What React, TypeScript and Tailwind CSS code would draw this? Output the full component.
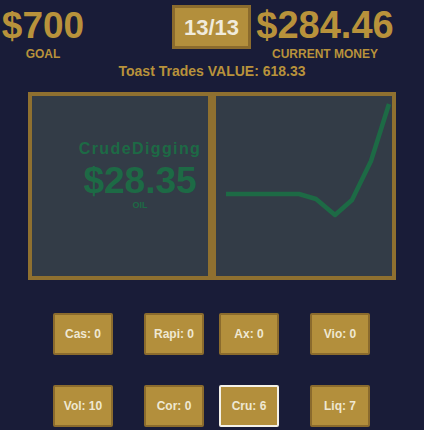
import React from 'react';

const font = { fontFamily: '"Liberation Sans", Arial, sans-serif' };

const rowOne = [
  { label: 'Cas: 0', ml: 'ml-[53px]' },
  { label: 'Rapi: 0', ml: 'ml-[31px]' },
  { label: 'Ax: 0', ml: 'ml-[15px]' },
  { label: 'Vio: 0', ml: 'ml-[31px]' },
];

const rowTwo = [
  { label: 'Vol: 10', ml: 'ml-[53px]' },
  { label: 'Cor: 0', ml: 'ml-[31px]' },
  { label: 'Cru: 6', ml: 'ml-[15px]', active: true },
  { label: 'Liq: 7', ml: 'ml-[31px]' },
];

const TradeButton: React.FC<{ label: string; ml: string; active?: boolean }> = ({ label, ml, active }) => (
  <button
    className={`${ml} w-[60px] h-[42px] rounded-[2px] bg-[#b38f3c] text-[12px] font-bold text-[#efe8d2] flex items-center justify-center ${
      active ? 'border-2 border-[#f4f1e8]' : 'border-2 border-[#8b6b2d]'
    }`}
  >
    {label}
  </button>
);

const App: React.FC = () => {
  // price history for the chart, already in panel coordinates
  const points = '10,98 83,98 100,103 119,119 136,104 155,65 173,8';

  return (
    <div className="w-[424px] h-[430px] bg-[#191c38] overflow-hidden" style={font}>
      {/* Header */}
      <div className="flex items-start pt-[5px]">
        <div className="ml-[1px] w-[84px] flex flex-col items-center">
          <div className="mt-[1px] text-[37px] leading-[39px] font-bold text-[#b8923b]">$700</div>
          <div className="mt-[3px] text-[12px] leading-[13px] font-bold text-[#b8923b]">GOAL</div>
        </div>
        <div className="ml-[87px] w-[79px] h-[44px] border-[3px] border-[#8b6b2d] bg-[#b38f3c] flex items-center justify-center">
          <span className="text-[22px] font-bold text-[#f0ebdc]">13/13</span>
        </div>
        <div className="ml-[6px] w-[136px] flex flex-col items-center">
          <div className="mt-[1px] text-[38px] leading-[39px] font-bold text-[#b8923b]">$284.46</div>
          <div className="mt-[3px] text-[12px] leading-[13px] font-bold text-[#b8923b]">CURRENT MONEY</div>
        </div>
      </div>

      <div className="mt-[2px] text-center text-[14px] leading-[16px] font-bold text-[#b8923b]">
        Toast Trades VALUE: 618.33
      </div>

      {/* Panels */}
      <div className="mt-[13px] mx-auto w-[368px] h-[188px] flex">
        <div className="w-[184px] h-full border-4 border-[#8f7030] bg-[#333c47] flex flex-col items-center pl-[40px] pt-[44px]">
          <div className="text-[16px] leading-[18px] font-bold tracking-[1.4px] text-[#1d6a45]">CrudeDigging</div>
          <div className="mt-[4px] text-[37px] leading-[37px] font-bold text-[#1d6a45]">$28.35</div>
          <div className="mt-[1px] text-[9px] leading-[10px] font-bold text-[#1d6a45]">OIL</div>
        </div>
        <div className="w-[184px] h-full border-4 border-[#8f7030] bg-[#333c47]">
          <svg width="176" height="180" viewBox="0 0 176 180">
            <polyline points={points} fill="none" stroke="#1d6a45" strokeWidth="4.5" strokeLinejoin="round" />
          </svg>
        </div>
      </div>

      {/* Buttons */}
      <div className="mt-[33px] flex">
        {rowOne.map((b) => (
          <TradeButton key={b.label} {...b} />
        ))}
      </div>
      <div className="mt-[30px] flex">
        {rowTwo.map((b) => (
          <TradeButton key={b.label} {...b} />
        ))}
      </div>
    </div>
  );
};

export default App;
